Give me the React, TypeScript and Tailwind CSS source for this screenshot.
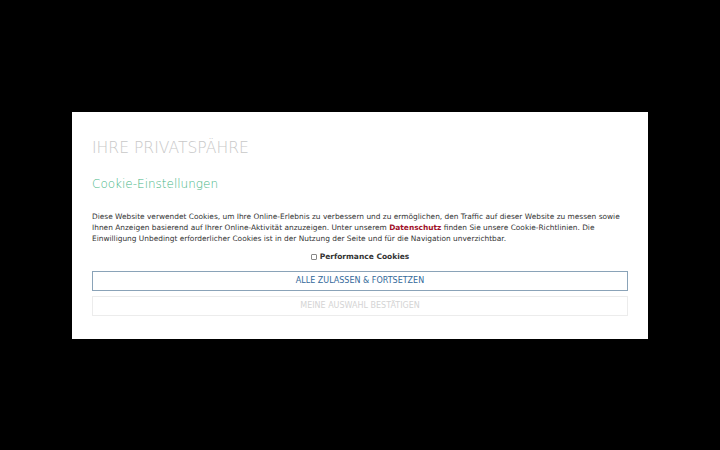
export default function App() {
  return (
    <div className="w-[720px] h-[450px] bg-black flex items-center justify-center" style={{ fontFamily: '"DejaVu Sans", sans-serif' }}>
      <div className="w-[576px] h-[227px] bg-white px-[20px] pt-[26px] flex flex-col">
        <h1 className="text-[15.6px] leading-[20px] font-extralight text-[#c8c8c8]">IHRE PRIVATSPÄHRE</h1>
        <h2 className="mt-[18px] text-[12px] leading-[16px] font-light text-[#45b685]">Cookie-Einstellungen</h2>
        <p className="mt-[19.5px] text-[7.42px] leading-[11px] text-[#333]">
          Diese Website verwendet Cookies, um Ihre Online-Erlebnis zu verbessern und zu ermöglichen, den Traffic auf dieser Website zu messen sowie Ihnen Anzeigen basierend auf Ihrer Online-Aktivität anzuzeigen. Unter unserem{' '}
          <a className="font-bold text-[#a0102a]">Datenschutz</a> finden Sie unsere Cookie-Richtlinien. Die Einwilligung Unbedingt erforderlicher Cookies ist in der Nutzung der Seite und für die Navigation unverzichtbar.
        </p>
        <label className="mt-[6.5px] h-[13px] flex items-center justify-center gap-[3px] text-[7.5px] font-bold text-[#333]">
          <span className="w-[6px] h-[6px] border border-[#888] rounded-[1px] bg-white" />
          Performance Cookies
        </label>
        <button className="mt-[7px] h-[20px] w-full border border-[#8aa3b8] text-[8px] text-[#33699a] uppercase">
          Alle zulassen &amp; fortsetzen
        </button>
        <button className="mt-[5px] h-[20px] w-full border border-[#ececec] text-[8px] text-[#d4d4d4] uppercase">
          Meine Auswahl bestätigen
        </button>
      </div>
    </div>
  );
}
